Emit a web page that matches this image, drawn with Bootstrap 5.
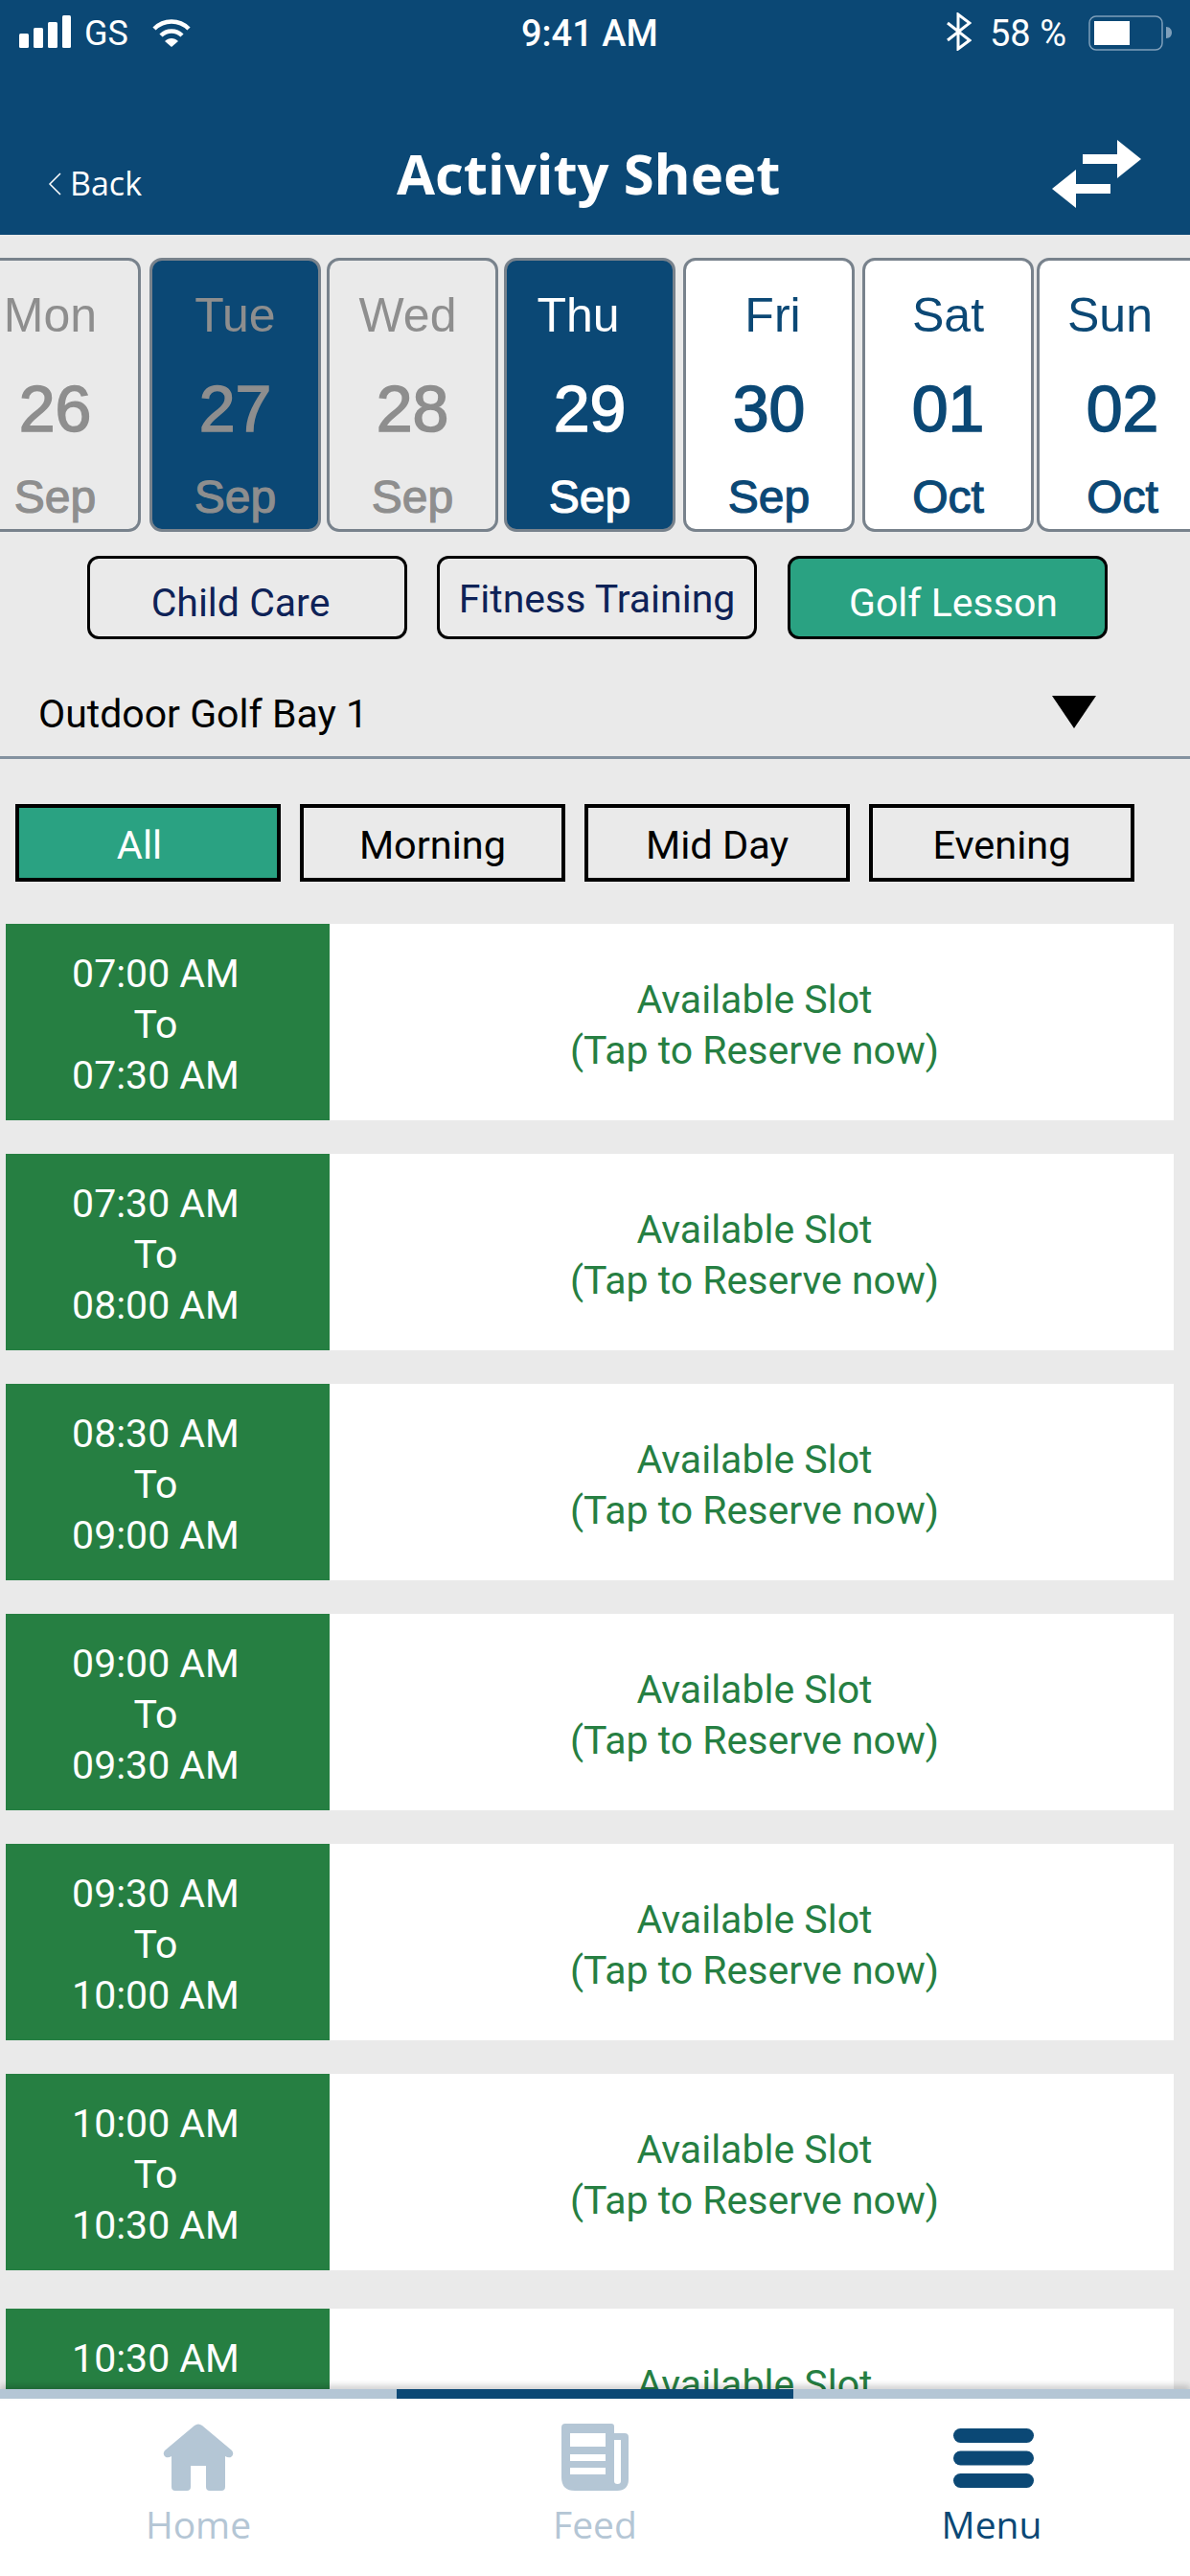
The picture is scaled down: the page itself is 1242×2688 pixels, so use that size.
<!DOCTYPE html>
<html lang="en">
<head>
<meta charset="utf-8">
<title>Activity Sheet</title>
<link href="https://cdn.jsdelivr.net/npm/bootstrap@5.3.0/dist/css/bootstrap.min.css" rel="stylesheet">
<style>
html,body{margin:0;background:#eaeaea}
.app-shell{height:2688px;width:1242px;overflow:hidden;font-family:Roboto,sans-serif;color:#000}
.top-head{background:#0b4875;height:245px;color:#fff;flex:none}
.status-row{height:60px;padding:14px 18px 0 20px;font-size:36px;line-height:42px}
.status-left{width:524px}
.status-right{margin-left:auto}
.sig-text{margin:0 25px 0 14px}
.clock{font-weight:500;font-size:38px}
.pct{margin:0 23px 0 19px;font-size:38px}
.ico-sig{margin-top:2px}.ico-wifi{margin-top:4px}.ico-bt{margin-top:-1px}.ico-bat{margin-top:2px}
.title-row{height:185px;padding:0 50px 0 50px}
.back-link{width:364px;font-family:"Open Sans",sans-serif;font-size:34px;margin-top:106px;color:#fff}
.back-link svg{margin-right:9px}
.page-title{font-family:"Open Sans",sans-serif;font-weight:700;font-size:58px;line-height:76px;margin:0;margin-top:83px}
.swap-ico{margin-left:auto;margin-top:85px}
.day-strip{margin:24px 0 0 -32px;height:286px;flex:none}
.day-cell{flex:0 0 179px;height:286px;border:3px solid #78828c;border-radius:13px;font-family:"Liberation Sans",Arial,sans-serif;color:#0b4875;background:#fff;margin-right:6px;text-align:center}
.day-cell.gone{background:#eaeaea;color:#8e8e8e}
.day-cell.past-sel{background:#0b4875;color:#8e8e8e}
.day-cell.sel{background:#0b4875;color:#fff}
.gap-nine{margin-right:9px}.gap-eight{margin-right:8px}.gap-three{margin-right:3px}
.d-name{font-size:50px;line-height:58px;margin-top:28px}
.d-num{font-size:68px;line-height:76px;margin-top:30px;-webkit-text-stroke:1.6px currentColor}
.d-mon{font-size:48px;line-height:56px;margin-top:27px;-webkit-text-stroke:1.2px currentColor}
.shift-a{padding-right:10px}.shift-b{padding-right:10px}.shift-c{padding-right:24px}.shift-d{padding-left:8px}.shift-e{padding-right:26px}
.svc-row{margin:25px 0 0 91px;gap:31px;flex:none}
.svc-btn{width:334px;height:87px;border:3px solid #000;border-radius:12px;background:transparent;color:#0e2257;font-size:41px;line-height:1;padding:4px 0 0;white-space:nowrap}
.svc-btn.on{background:#2aa282;color:#fff}
.svc-a{padding-right:14px;padding-top:12px}.svc-b{padding-top:4px}.svc-c{padding-left:12px;padding-top:12px;margin-left:1px}
.picker{height:125px;border-bottom:3px solid #8492a0;padding:0 98px 0 40px;font-size:41px;flex:none}
.picker span{margin-top:48px}
.picker svg{margin-left:auto;margin-top:59px}
.filter-row{margin:47px 0 0 16px;gap:20px;flex:none}
.flt-btn{width:277px;height:81px;border:4px solid #000;border-radius:0;background:transparent;color:#000;font-size:41.500px;line-height:1;padding:5px 0 0}
.flt-btn.on{background:#2aa282;color:#fff;padding-right:18px}
.slot-list{flex:1 1 0;min-height:0;overflow:hidden;margin-top:44px;padding:0 17px 0 6px}
.slot-row{height:205px;margin-bottom:35px;background:#fff}
.slot-row.final{margin-top:40px}
.slot-time{width:338px;background:#267f42;color:#fff;font-size:41px;line-height:53px;padding-top:26px;padding-right:25px;text-align:center}
.slot-info{flex:1;color:#267f42;font-size:41px;line-height:53px;text-align:center;padding-top:53px;padding-left:6px}
.tab-track{height:10px;background:#b4c6d5;flex:none;box-shadow:0 -4px 6px rgba(0,0,0,.18);position:relative}
.tab-thumb{margin-left:414px;width:414px;height:10px;background:#0b4875}
.tab-bar{background:#fff;height:185px;flex:none;font-family:"Open Sans",sans-serif;font-size:39px;line-height:44px;color:#b4c6d5}
.tab-item{width:414px;padding-top:26px;text-align:center}
.tab-item.on{color:#0b4875}
.tab-ico{display:block;height:70px;margin:0 auto 13px}
.tab-ico.ico-menu{height:62px;margin:5px auto 16px;position:relative;left:2px}
</style>
</head>
<body>
<div class="app-shell d-flex flex-column">
  <header class="top-head">
    <div class="status-row d-flex">
      <div class="status-left d-flex align-items-start">
        <svg class="ico-sig" width="54" height="34" viewBox="0 0 54 34"><rect x="0" y="19" width="10" height="15" rx="1.5" fill="#fff"/><rect x="15" y="13" width="10" height="21" rx="1.5" fill="#fff"/><rect x="30" y="7" width="10" height="27" rx="1.5" fill="#fff"/><rect x="45" y="0" width="9" height="34" rx="1.5" fill="#fff"/></svg>
        <span class="sig-text">GS</span>
        <svg class="ico-wifi" width="40" height="31" viewBox="0 0 40 31"><path d="M2 12 C12 2 28 2 38 12" fill="none" stroke="#fff" stroke-width="4.5"/><path d="M9 19 C15 13 25 13 31 19" fill="none" stroke="#fff" stroke-width="4.5"/><path d="M13 25 C17 21 23 21 27 25 L20 31 Z" fill="#fff"/></svg>
      </div>
      <span class="clock">9:41 AM</span>
      <div class="status-right d-flex align-items-start">
        <svg class="ico-bt" width="26" height="40" viewBox="0 0 26 40"><path d="M1 11 L24 29 L12 38 L12 2 L24 11 L1 29" fill="none" stroke="#fff" stroke-width="3"/></svg>
        <span class="pct">58 %</span>
        <svg class="ico-bat" width="88" height="38" viewBox="0 0 88 38"><rect x="1" y="1" width="76" height="35" rx="7" fill="none" stroke="#7f9fba" stroke-width="1.5"/><rect x="6" y="6" width="37" height="25" fill="#fff"/><path d="M81 12 C85 12 87 15 87 18 C87 21 85 24 81 24 Z" fill="#7f9fba"/></svg>
      </div>
    </div>
    <div class="title-row d-flex align-items-start">
      <a class="back-link text-decoration-none d-flex align-items-center" href="#"><svg width="14" height="24" viewBox="0 0 14 24"><path d="M13 1 L2 12 L13 23" fill="none" stroke="#fff" stroke-width="1.5"/></svg>Back</a>
      <h1 class="page-title">Activity Sheet</h1>
      <svg class="swap-ico" width="94" height="72" viewBox="0 0 94 72"><path d="M32 16 H68 V1 L93 21 L68 41 V26 H32 Z M61 47 H25 V32 L0 52 L25 72 V57 H61 Z" fill="#fff"/></svg>
    </div>
  </header>

  <div class="day-strip d-flex">
    <div class="day-cell gone gap-nine"><div class="d-name shift-a">Mon</div><div class="d-num">26</div><div class="d-mon">Sep</div></div>
    <div class="day-cell past-sel"><div class="d-name">Tue</div><div class="d-num">27</div><div class="d-mon">Sep</div></div>
    <div class="day-cell gone"><div class="d-name shift-b">Wed</div><div class="d-num">28</div><div class="d-mon">Sep</div></div>
    <div class="day-cell sel gap-eight"><div class="d-name shift-c">Thu</div><div class="d-num">29</div><div class="d-mon">Sep</div></div>
    <div class="day-cell gap-eight"><div class="d-name shift-d">Fri</div><div class="d-num">30</div><div class="d-mon">Sep</div></div>
    <div class="day-cell gap-three"><div class="d-name">Sat</div><div class="d-num">01</div><div class="d-mon">Oct</div></div>
    <div class="day-cell"><div class="d-name shift-e">Sun</div><div class="d-num">02</div><div class="d-mon">Oct</div></div>
  </div>

  <div class="svc-row d-flex">
    <button class="btn svc-btn svc-a" type="button">Child Care</button>
    <button class="btn svc-btn svc-b" type="button">Fitness Training</button>
    <button class="btn svc-btn svc-c on" type="button">Golf Lesson</button>
  </div>

  <div class="picker d-flex align-items-start">
    <span>Outdoor Golf Bay 1</span>
    <svg width="46" height="34" viewBox="0 0 46 34"><path d="M0 0 H46 L23 34 Z" fill="#000"/></svg>
  </div>

  <div class="filter-row d-flex">
    <button class="btn flt-btn on" type="button">All</button>
    <button class="btn flt-btn" type="button">Morning</button>
    <button class="btn flt-btn" type="button">Mid Day</button>
    <button class="btn flt-btn" type="button">Evening</button>
  </div>

  <div class="slot-list">
    <div class="slot-row d-flex"><div class="slot-time">07:00 AM<br>To<br>07:30 AM</div><div class="slot-info">Available Slot<br>(Tap to Reserve now)</div></div>
    <div class="slot-row d-flex"><div class="slot-time">07:30 AM<br>To<br>08:00 AM</div><div class="slot-info">Available Slot<br>(Tap to Reserve now)</div></div>
    <div class="slot-row d-flex"><div class="slot-time">08:30 AM<br>To<br>09:00 AM</div><div class="slot-info">Available Slot<br>(Tap to Reserve now)</div></div>
    <div class="slot-row d-flex"><div class="slot-time">09:00 AM<br>To<br>09:30 AM</div><div class="slot-info">Available Slot<br>(Tap to Reserve now)</div></div>
    <div class="slot-row d-flex"><div class="slot-time">09:30 AM<br>To<br>10:00 AM</div><div class="slot-info">Available Slot<br>(Tap to Reserve now)</div></div>
    <div class="slot-row d-flex"><div class="slot-time">10:00 AM<br>To<br>10:30 AM</div><div class="slot-info">Available Slot<br>(Tap to Reserve now)</div></div>
    <div class="slot-row final d-flex"><div class="slot-time">10:30 AM<br>To<br>11:00 AM</div><div class="slot-info">Available Slot<br>(Tap to Reserve now)</div></div>
  </div>

  <div class="tab-track"><div class="tab-thumb"></div></div>
  <nav class="tab-bar d-flex">
    <div class="tab-item"><svg class="tab-ico" width="74" height="70" viewBox="0 0 74 70"><path d="M33 2 Q37 -1 41 2 L72 28 Q75 32 71 35 Q68 36 65 34 V66 Q65 70 61 70 H49 Q45 70 45 66 V44 H29 V66 Q29 70 25 70 H13 Q9 70 9 66 V34 Q6 36 3 35 Q-1 32 2 28 Z" fill="#b4c6d5"/></svg>Home</div>
    <div class="tab-item"><svg class="tab-ico" width="70" height="70" viewBox="0 0 70 70"><path fill-rule="evenodd" d="M4 0 H52 Q55 0 55 3 V10 H66 Q70 10 70 14 V58 Q70 70 58 70 H14 Q0 70 0 56 V4 Q0 0 4 0 Z M9 10 V24 H46 V10 Z M9 32 V39 H46 V32 Z M9 46 V53 H46 V46 Z M55 17 V60 Q55 63 58.500 63 Q62 63 62 60 V17 Z" fill="#b4c6d5"/></svg>Feed</div>
    <div class="tab-item on"><svg class="tab-ico ico-menu" width="84" height="62" viewBox="0 0 84 62"><rect x="0" y="0" width="84" height="15" rx="7.500" fill="#0b4875"/><rect x="0" y="23.500" width="84" height="15" rx="7.500" fill="#0b4875"/><rect x="0" y="47" width="84" height="15" rx="7.500" fill="#0b4875"/></svg>Menu</div>
  </nav>
</div>
<script src="https://cdn.jsdelivr.net/npm/bootstrap@5.3.0/dist/js/bootstrap.bundle.min.js"></script>
</body>
</html>
